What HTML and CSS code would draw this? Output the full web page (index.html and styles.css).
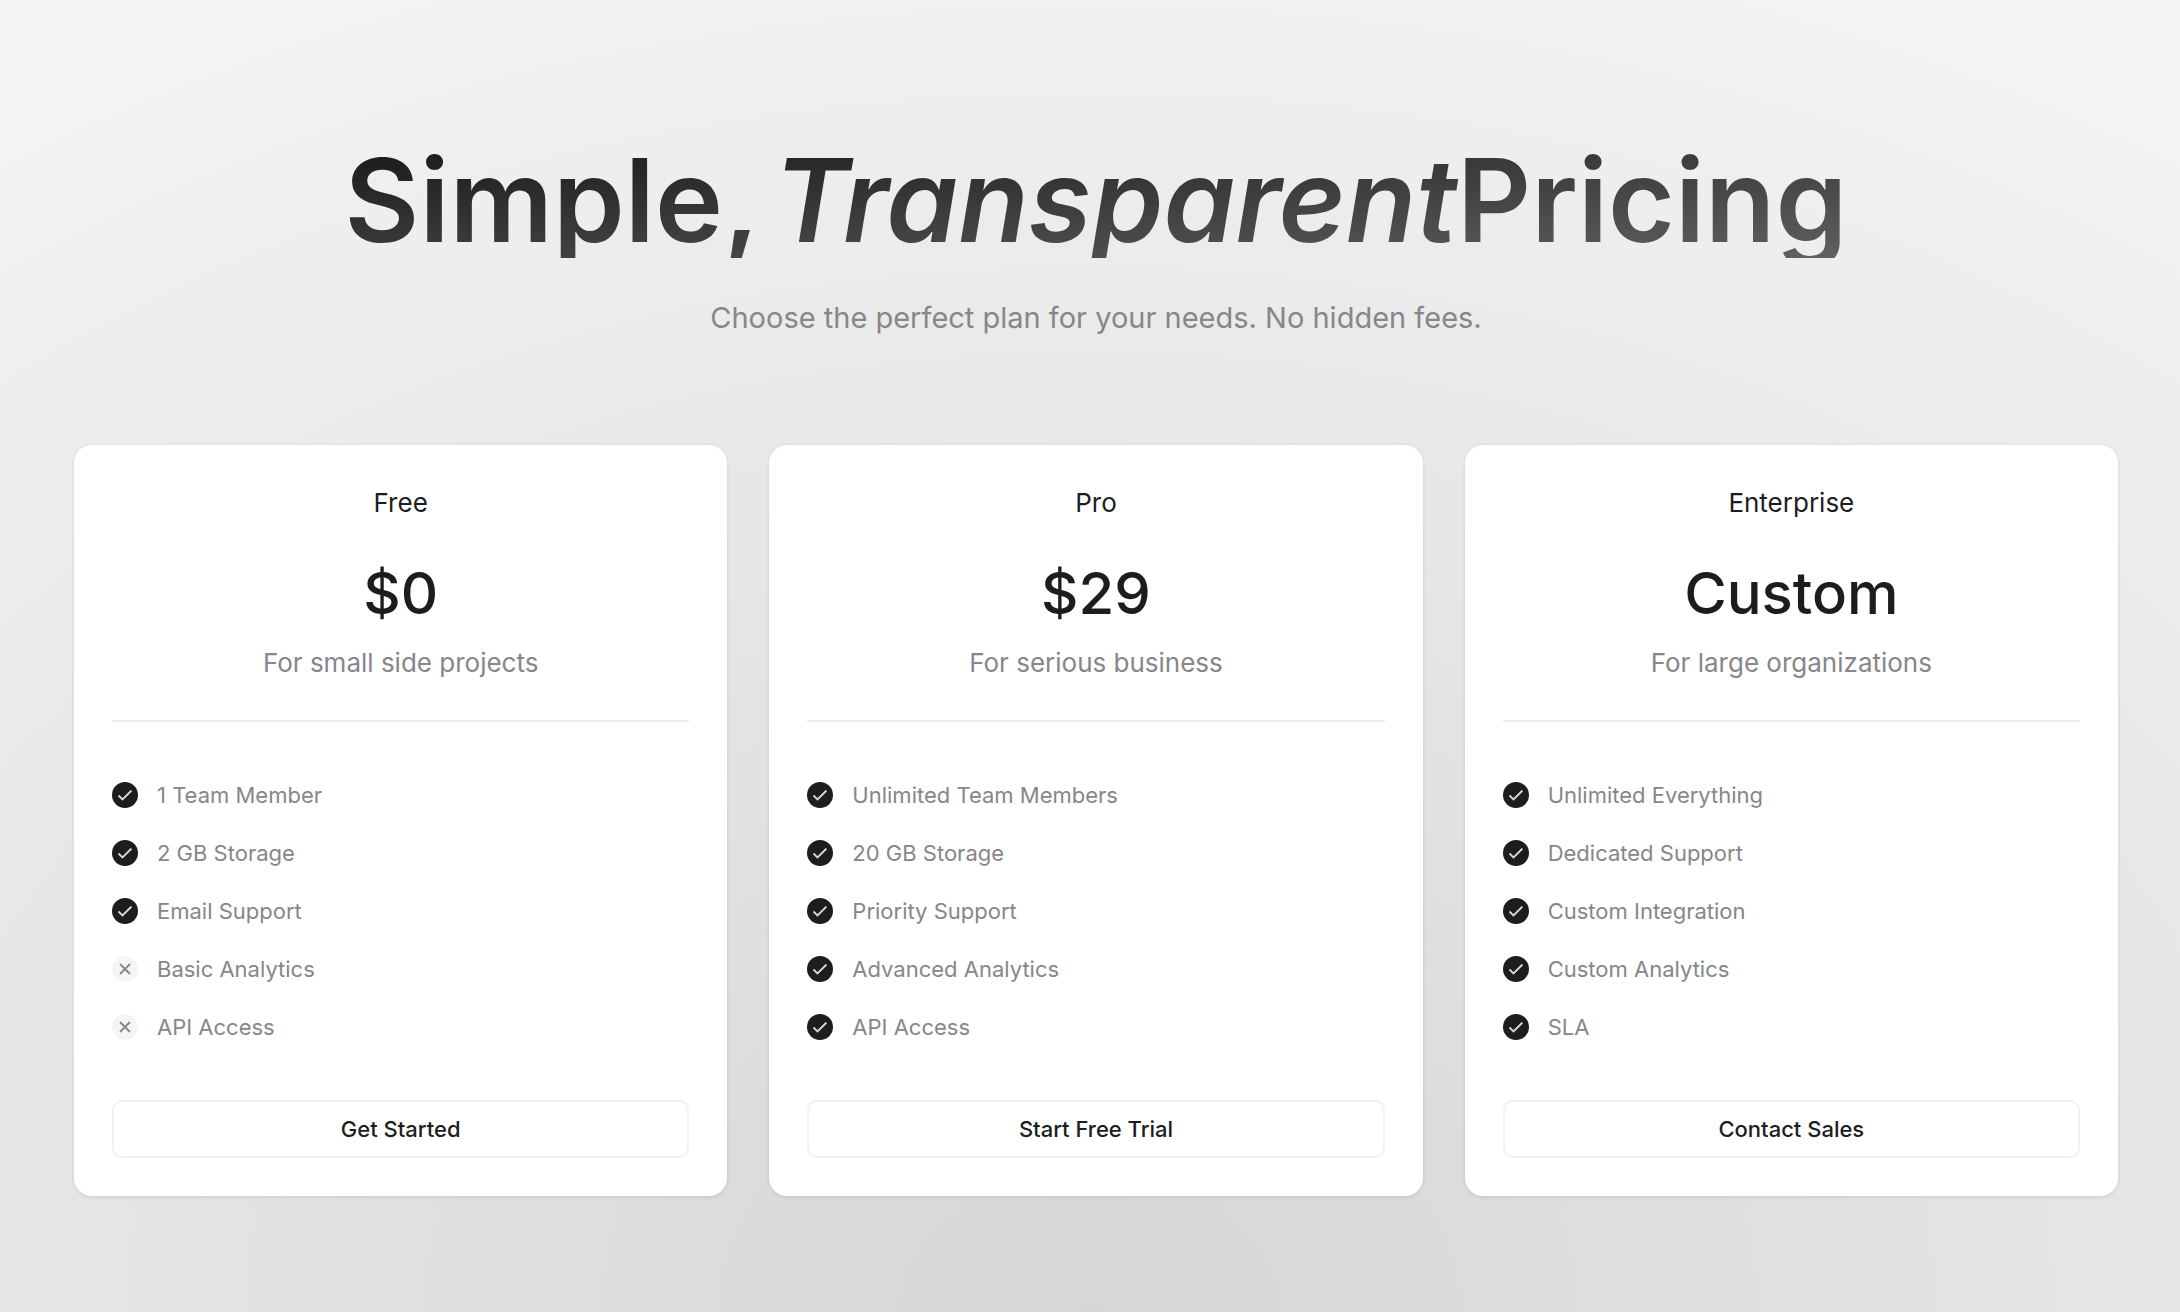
FILE: index.html
```html
<!DOCTYPE html>
<html lang="en">
<head>
<meta charset="utf-8">
<meta name="viewport" content="width=device-width, initial-scale=1">
<title>Pricing</title>
<link rel="stylesheet" href="styles.css">
</head>
<body>
<svg class="sprite" aria-hidden="true">
  <symbol id="check" viewBox="0 0 16 16"><path d="M1.5 8.5 5.5 12.5 14.5 3.5"/></symbol>
  <symbol id="cross" viewBox="0 0 16 16"><path d="M3 3 13 13M13 3 3 13"/></symbol>
</svg>
<main class="pricing">
  <header class="intro">
    <h1 class="title">Simple, <em class="title-accent">Transparent</em> Pricing</h1>
    <p class="subtitle">Choose the perfect plan for your needs. No hidden fees.</p>
  </header>
  <div class="plans">
    <section class="card">
      <div class="card-head">
        <h2 class="plan-name">Free</h2>
        <p class="price">$0</p>
        <p class="plan-note">For small side projects</p>
      </div>
      <ul class="features">
        <li class="feature"><svg class="mark"><use href="#check"/></svg>1 Team Member</li>
        <li class="feature"><svg class="mark"><use href="#check"/></svg>2 GB Storage</li>
        <li class="feature"><svg class="mark"><use href="#check"/></svg>Email Support</li>
        <li class="feature"><svg class="mark mark-off"><use href="#cross"/></svg>Basic Analytics</li>
        <li class="feature"><svg class="mark mark-off"><use href="#cross"/></svg>API Access</li>
      </ul>
      <button class="action" type="button">Get Started</button>
    </section>
    <section class="card">
      <div class="card-head">
        <h2 class="plan-name">Pro</h2>
        <p class="price">$29</p>
        <p class="plan-note">For serious business</p>
      </div>
      <ul class="features">
        <li class="feature"><svg class="mark"><use href="#check"/></svg>Unlimited Team Members</li>
        <li class="feature"><svg class="mark"><use href="#check"/></svg>20 GB Storage</li>
        <li class="feature"><svg class="mark"><use href="#check"/></svg>Priority Support</li>
        <li class="feature"><svg class="mark"><use href="#check"/></svg>Advanced Analytics</li>
        <li class="feature"><svg class="mark"><use href="#check"/></svg>API Access</li>
      </ul>
      <button class="action" type="button">Start Free Trial</button>
    </section>
    <section class="card">
      <div class="card-head">
        <h2 class="plan-name">Enterprise</h2>
        <p class="price">Custom</p>
        <p class="plan-note">For large organizations</p>
      </div>
      <ul class="features">
        <li class="feature"><svg class="mark"><use href="#check"/></svg>Unlimited Everything</li>
        <li class="feature"><svg class="mark"><use href="#check"/></svg>Dedicated Support</li>
        <li class="feature"><svg class="mark"><use href="#check"/></svg>Custom Integration</li>
        <li class="feature"><svg class="mark"><use href="#check"/></svg>Custom Analytics</li>
        <li class="feature"><svg class="mark"><use href="#check"/></svg>SLA</li>
      </ul>
      <button class="action" type="button">Contact Sales</button>
    </section>
  </div>
</main>
</body>
</html>
```

FILE: styles.css
```css
* {
  box-sizing: border-box;
  margin: 0;
  padding: 0;
}

body {
  min-height: 100vh;
  font-family: Inter, "Liberation Sans", sans-serif;
  color: #1d1d1f;
  background: radial-gradient(106% 128% at 50% 100%, #d6d6d6 0%, #f8f8f8 100%);
}

.sprite {
  display: none;
}

.pricing {
  padding: 143px 62px 116px 74px;
}

.intro {
  display: flex;
  flex-direction: column;
  align-items: center;
  gap: 40px;
  margin-bottom: 107px;
  text-align: center;
}

.title {
  display: flex;
  flex-wrap: wrap;
  justify-content: center;
  font-size: 115px;
  font-weight: 600;
  line-height: 1;
  color: transparent;
  background: linear-gradient(to bottom right, #18181a, #606062);
  background-clip: text;
  -webkit-background-clip: text;
}

.title-accent {
  margin-left: 14px;
}

.subtitle {
  font-size: 29px;
  line-height: 40px;
  color: #86868b;
}

.plans {
  display: grid;
  grid-template-columns: repeat(3, 1fr);
  gap: 42px;
}

.card {
  display: flex;
  flex-direction: column;
  padding: 38px;
  border-radius: 18px;
  background: #fff;
  box-shadow: 0 0 0 2px rgba(0, 0, 0, 0.02), 0 2px 4px rgba(0, 0, 0, 0.05);
}

.card-head {
  display: flex;
  flex-direction: column;
  align-items: center;
  padding-bottom: 37px;
  border-bottom: 2px solid #eee;
  text-align: center;
}

.plan-name {
  font-size: 26px;
  font-weight: 400;
  line-height: 40px;
}

.price {
  margin: 38px 0 18px;
  font-size: 58px;
  font-weight: 500;
  line-height: 64px;
}

.plan-note {
  font-size: 26px;
  line-height: 40px;
  color: #86868b;
}

.features {
  display: grid;
  gap: 24px;
  padding: 56px 0;
  list-style: none;
}

.feature {
  display: flex;
  align-items: center;
  gap: 19px;
  font-size: 22px;
  line-height: 34px;
  color: #86868b;
}

.mark {
  width: 26px;
  height: 26px;
  padding: 5px;
  border-radius: 50%;
  background: #1d1d1f;
  fill: none;
  stroke: #d8d8d8;
  stroke-width: 1.8;
}

.mark-off {
  background: #f5f5f5;
  stroke: #86868b;
}

.action {
  height: 58px;
  border: 2px solid #f2f2f2;
  border-radius: 10px;
  background: #fff;
  color: #1d1d1f;
  font: 500 22px/32px Inter, "Liberation Sans", sans-serif;
}
```
